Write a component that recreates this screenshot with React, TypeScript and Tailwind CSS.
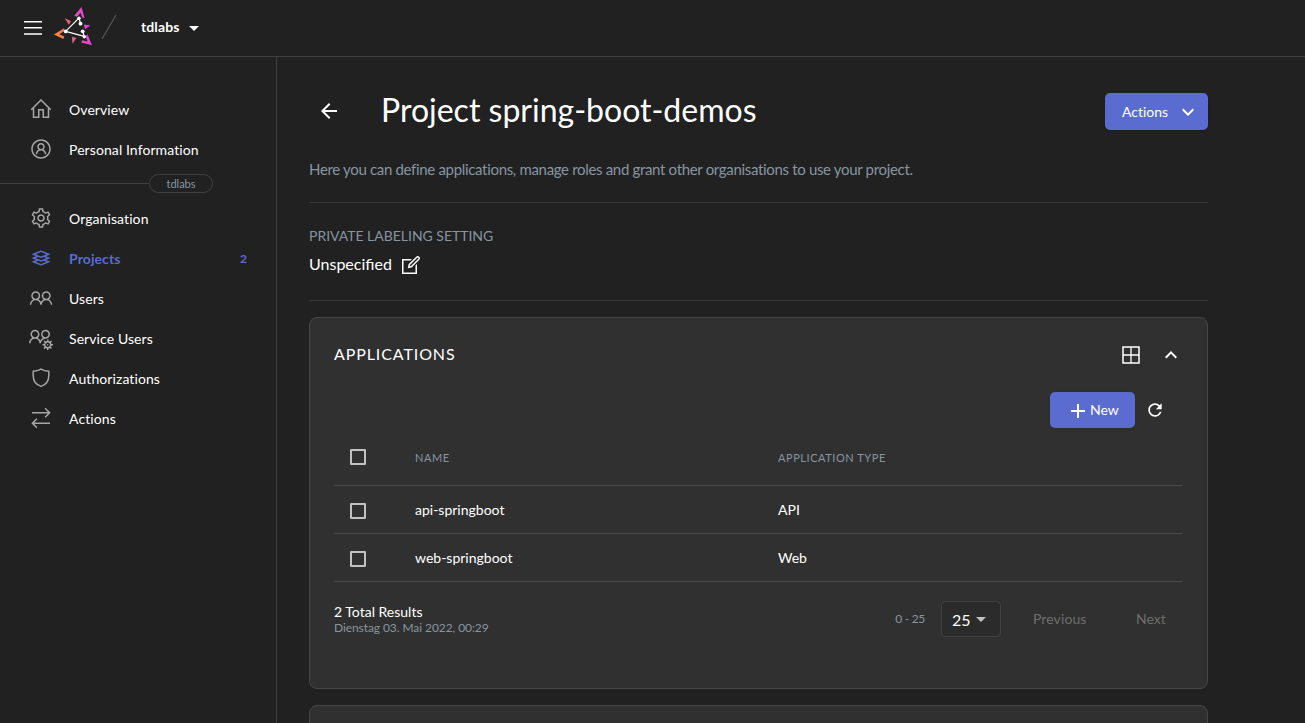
import type { ReactNode } from "react";
import {
  LiaHomeSolid,
  LiaUserCircle,
  LiaCogSolid,
  LiaLayerGroupSolid,
  LiaUserFriendsSolid,
  LiaUsersCogSolid,
  LiaExchangeAltSolid,
  LiaEditSolid,
} from "react-icons/lia";
import { MdArrowBack, MdArrowDropDown, MdAdd, MdRefresh, MdKeyboardArrowDown, MdKeyboardArrowUp } from "react-icons/md";

function Logo() {
  return (
    <svg width="40" height="40" viewBox="0 0 40 40" className="block" fill="none">
      <defs>
        <linearGradient id="g" x1="0" y1="30" x2="36" y2="22" gradientUnits="userSpaceOnUse">
          <stop offset="0" stopColor="#ff8f1f" />
          <stop offset="0.5" stopColor="#e95c8d" />
          <stop offset="1" stopColor="#e03fe0" />
        </linearGradient>
      </defs>
      <g fill="url(#g)">
        <path d="M27.5 1 30.6 12 28.2 11.6 26.6 6.8 23 10.8 20.3 9.8Z" />
        <path d="M38 39.2 27.3 36.6 28 34.2 33.6 35.4 31.4 30.2 33.6 28.6Z" />
        <path d="M0 28.6 10 22.3 10.6 24.8 5.4 28.2 10.4 30.6 9.3 32.9Z" />
        <path d="M10.7 12.2 17 15 14.9 18.8Z" />
        <path d="M29.8 18.6 36.4 19.4 31 23.2Z" />
        <path d="M17.9 30.8 22.3 32 18.6 37.7Z" />
      </g>
      <path d="M25 12 11.6 25.4 30.3 30.4" stroke="#fff" strokeWidth="1.1" />
      <path d="M25 12 26.5 17.7M28.7 25.5 30.3 30.4" stroke="#fff" strokeWidth="1.2" />
      <g fill="#fff">
        <circle cx="25" cy="12.3" r="1.7" />
        <circle cx="26.5" cy="17.7" r="1.9" />
        <circle cx="11.7" cy="25.4" r="1.9" />
        <circle cx="28.7" cy="25.3" r="1.9" />
        <circle cx="30.3" cy="30.8" r="1.7" />
      </g>
    </svg>
  );
}

function Shield() {
  return (
    <svg width="24" height="24" viewBox="0 0 24 24" fill="none" stroke="currentColor" strokeWidth="1.5">
      <path d="M12 3.2C9.7 4.6 7 5.2 4.2 5.2V9.5C4.2 14.7 7 18.7 12 20.4 17 18.7 19.8 14.7 19.8 9.5V5.2C17 5.2 14.3 4.6 12 3.2Z" />
    </svg>
  );
}

function NavItem({ icon, label, count, active }: { icon: ReactNode; label: string; count?: string; active?: boolean }) {
  return (
    <a className={active ? "flex h-10 items-center pl-[29px] pr-[29px] text-[#5a6cd0] font-bold" : "flex h-10 items-center pl-[29px] pr-[29px] text-white"}>
      <span className={active ? "flex w-6 shrink-0 pb-[2px]" : "flex w-6 shrink-0 pb-[2px] text-[#a6a6a6]"}>{icon}</span>
      <span className="ml-4 flex-1 text-sm tracking-[0.09px]">{label}</span>
      {count && <span className="text-xs">{count}</span>}
    </a>
  );
}

function Box() {
  return <span className="block size-4 rounded-[1px] border-2 border-[#c1c1c1]" />;
}

function Row({ name, type }: { name: string; type: string }) {
  return (
    <div className="flex h-12 items-center border-b border-[#4a4a4a] pl-4 text-sm text-white">
      <div className="w-[65px] pt-[3px]"><Box /></div>
      <div className="w-[363px]">{name}</div>
      <div>{type}</div>
    </div>
  );
}

export default function App() {
  return (
    <div className="flex h-[723px] w-[1305px] flex-col overflow-hidden bg-[#212121] font-['Lato',sans-serif] text-white [font-variant-ligatures:none]">
      <header className="flex h-[57px] shrink-0 items-center border-b border-[#404040] pl-6">
        <svg width="18" height="14" viewBox="0 0 18 14" className="block" fill="#fff">
          <path d="M0 0h18v1.5H0zM0 6.1h18v1.5H0zM0 12.2h18v1.5H0z" />
        </svg>
        <div className="ml-3 mb-1"><Logo /></div>
        <svg width="16" height="26" viewBox="0 0 16 26" className="ml-[7px] mb-[3px]" stroke="#555" strokeWidth="1.3">
          <path d="M1 25 15 1" />
        </svg>
        <span className="ml-6 mb-[2px] text-sm font-bold tracking-[0.1px]">tdlabs</span>
        <MdArrowDropDown className="ml-[3px] size-6" />
      </header>
      <div className="flex min-h-0 flex-1">
        <nav className="w-[277px] shrink-0 border-r border-[#404040] pt-[33px]">
          <NavItem icon={<LiaHomeSolid size={24} />} label="Overview" />
          <NavItem icon={<LiaUserCircle size={24} />} label="Personal Information" />
          <div className="flex h-[29px] items-center pb-[2px]">
            <div className="h-px w-[149px] bg-[#404040]" />
            <div className="flex h-[19px] w-16 items-center justify-center rounded-full border border-[#404040] pt-px text-[11px] text-[#8795a1]">tdlabs</div>
          </div>
          <NavItem icon={<LiaCogSolid size={24} />} label="Organisation" />
          <NavItem icon={<LiaLayerGroupSolid size={24} />} label="Projects" count="2" active />
          <NavItem icon={<LiaUserFriendsSolid size={24} />} label="Users" />
          <NavItem icon={<LiaUsersCogSolid size={24} />} label="Service Users" />
          <NavItem icon={<Shield />} label="Authorizations" />
          <NavItem icon={<LiaExchangeAltSolid size={24} />} label="Actions" />
        </nav>
        <main className="ml-8 w-[899px] shrink-0 pt-[29px]">
          <div className="flex h-[51px] items-center">
            <MdArrowBack className="mb-[2px] ml-2 size-6" />
            <h1 className="mb-1 ml-10 flex-1 text-[32px] leading-[47px]">Project spring-boot-demos</h1>
            <button className="flex h-[37px] w-[103px] items-center rounded-[5px] bg-[#5a6cd0] pl-[17px] text-sm shadow">
              <span className="flex-1 text-left">Actions</span>
              <MdKeyboardArrowDown className="mr-2 size-6" />
            </button>
          </div>
          <p className="mt-[22px] whitespace-nowrap text-[15px] leading-5 tracking-[-0.325px] text-[#8795a1]">
            Here you can define applications, manage roles and grant other organisations to use your project.
          </p>
          <div className="mt-[23px] h-px bg-[#363636]" />
          <div className="mt-[23px] text-sm leading-5 tracking-[-0.02px] text-[#8795a1]">PRIVATE LABELING SETTING</div>
          <div className="mt-[6px] flex h-6 items-center text-base [font-variant-ligatures:normal]">
            Unspecified
            <LiaEditSolid className="ml-[7.5px] mt-px size-6" />
          </div>
          <div className="mt-6 h-px bg-[#363636]" />
          <section className="mt-4 h-[372px] rounded-lg border border-[#474747] bg-[#303030] px-6">
            <div className="flex h-[73px] items-center">
              <h2 className="flex-1 pb-[2px] text-base tracking-[0.9px]">APPLICATIONS</h2>
              <svg width="18" height="18" viewBox="0 0 18 18" className="mr-[19px]" fill="none" stroke="#fff">
                <rect x="1" y="1" width="16" height="16" strokeWidth="1.5" />
                <path d="M9 1V17M1 9H17" strokeWidth="1.3" />
              </svg>
              <MdKeyboardArrowUp className="size-6" />
            </div>
            <div className="flex h-[38px] items-center">
              <button className="ml-[716px] flex h-9 w-[85px] items-center rounded-[5px] bg-[#5a6cd0] pl-4 text-sm shadow">
                <MdAdd className="mt-px size-6" />
                New
              </button>
              <MdRefresh className="ml-[10px] size-5" />
            </div>
            <div className="flex h-[57px] items-center border-b border-[#4a4a4a] pl-4 text-[11px] tracking-[0.55px] text-[#8795a1]">
              <div className="w-[65px]"><Box /></div>
              <div className="w-[363px] pt-[3px]">NAME</div>
              <div className="pt-[3px]">APPLICATION TYPE</div>
            </div>
            <Row name="api-springboot" type="API" />
            <Row name="web-springboot" type="Web" />
            <div className="flex h-[73px] items-center text-sm">
              <div className="flex-1 pt-[3px]">
                <div className="leading-4">2 Total Results</div>
                <div className="text-xs leading-4 tracking-[-0.08px] text-[#8795a1]">Dienstag 03. Mai 2022, 00:29</div>
              </div>
              <span className="text-xs tracking-[-0.3px] text-[#8795a1]">0 - 25</span>
              <div className="ml-4 mr-8 flex h-9 w-[60px] items-center rounded border border-[#414141] bg-[#2b2b2b] pl-[10px] text-base">
                <span className="pt-[2px]">25</span>
                <MdArrowDropDown className="-ml-[2px] size-6 text-[#c1c1c1]" />
              </div>
              <span className="w-[103px] tracking-[0.1px] text-[#6e6e6e]">Previous</span>
              <span className="w-[47px] text-[#6e6e6e]">Next</span>
            </div>
          </section>
          <section className="mt-4 h-20 rounded-lg border border-[#474747] bg-[#303030]" />
        </main>
      </div>
    </div>
  );
}
